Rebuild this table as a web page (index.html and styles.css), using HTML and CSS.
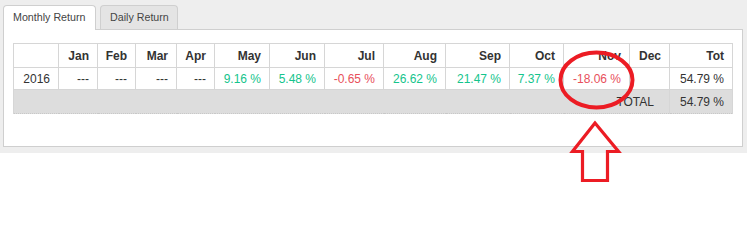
FILE: index.html
```html
<!DOCTYPE html>
<html>
<head>
<meta charset="utf-8">
<link rel="stylesheet" href="styles.css">
</head>
<body>
<div class="area">
  <div class="tabs">
    <div class="tab active">Monthly Return</div>
    <div class="tab">Daily Return</div>
  </div>
  <div class="panel">
    <table class="returns">
      <colgroup>
        <col style="width:45px"><col style="width:39px"><col style="width:38px"><col style="width:41px"><col style="width:38px"><col style="width:55px"><col style="width:55px"><col style="width:59px"><col style="width:62px"><col style="width:64px"><col style="width:54px"><col style="width:66px"><col style="width:40px"><col style="width:63px">
      </colgroup>
      <thead>
        <tr>
          <th></th><th>Jan</th><th>Feb</th><th>Mar</th><th>Apr</th><th>May</th><th>Jun</th><th>Jul</th><th>Aug</th><th>Sep</th><th>Oct</th><th>Nov</th><th>Dec</th><th>Tot</th>
        </tr>
      </thead>
      <tbody>
        <tr class="data">
          <td>2016</td><td>---</td><td>---</td><td>---</td><td>---</td>
          <td class="pos">9.16 %</td><td class="pos">5.48 %</td><td class="neg">-0.65 %</td><td class="pos">26.62 %</td><td class="pos">21.47 %</td><td class="pos">7.37 %</td><td class="neg">-18.06 %</td><td></td><td>54.79 %</td>
        </tr>
        <tr class="total">
          <td colspan="13" class="total-label">TOTAL</td><td class="total-val">54.79 %</td>
        </tr>
      </tbody>
    </table>
  </div>
</div>
<svg class="annot" width="747" height="250" viewBox="0 0 747 250">
  <ellipse cx="596.5" cy="80" rx="36" ry="27.5" fill="none" stroke="#ec1c24" stroke-width="4"/>
  <path d="M595 123 L572.5 151.5 L582.5 151.5 L582.5 180.5 L607.5 180.5 L607.5 151.5 L618.5 151.5 Z" fill="none" stroke="#ec1c24" stroke-width="3.2" stroke-linejoin="miter"/>
</svg>
</body>
</html>
```

FILE: styles.css
```css
html, body {
  margin: 0;
  padding: 0;
  background: #fff;
  font-family: "Liberation Sans", Arial, sans-serif;
  font-size: 12px;
  color: #333;
}
.area {
  background: #eeeeee;
  padding: 5px 4px 7px 3px;
  height: 141px;
}
.tabs {
  display: flex;
  gap: 4px;
  height: 24px;
  position: relative;
  z-index: 1;
}
.tab {
  box-sizing: border-box;
  height: 24px;
  padding: 0 0 0 9px;
  line-height: 23px;
  font-size: 10.7px;
  white-space: nowrap;
  border: 1px solid #cfcfcf;
  border-bottom: none;
  border-radius: 4px 4px 0 0;
  background: #e4e4e4;
  color: #444;
}
.tab.active {
  background: #fff;
  width: 93px;
  height: 25px;
}
.tab:not(.active) {
  width: 78px;
}
.panel {
  box-sizing: border-box;
  background: #fff;
  border: 1px solid #cfcfcf;
  height: 118px;
  padding: 13px 9px 0 9px;
}
.returns {
  border-collapse: collapse;
  table-layout: fixed;
  width: 719px;
}
.returns th, .returns td {
  border: 1px solid #d6d6d6;
  padding: 0 8px 0 4px;
  text-align: right;
  white-space: nowrap;
  overflow: visible;
}
.returns th {
  height: 23px;
  font-weight: bold;
  color: #333;
}
.data td {
  height: 21px;
  border-bottom: 1px dotted #c8c8c8;
}
.total td {
  height: 23px;
  background: #dddddd;
  border-bottom: 1px dotted #c8c8c8;
}
.total-label {
  padding-right: 15px !important;
}
.pos { color: #14c48c; }
.neg { color: #e8505b; }
.annot {
  position: absolute;
  left: 0;
  top: 0;
  pointer-events: none;
}
```
